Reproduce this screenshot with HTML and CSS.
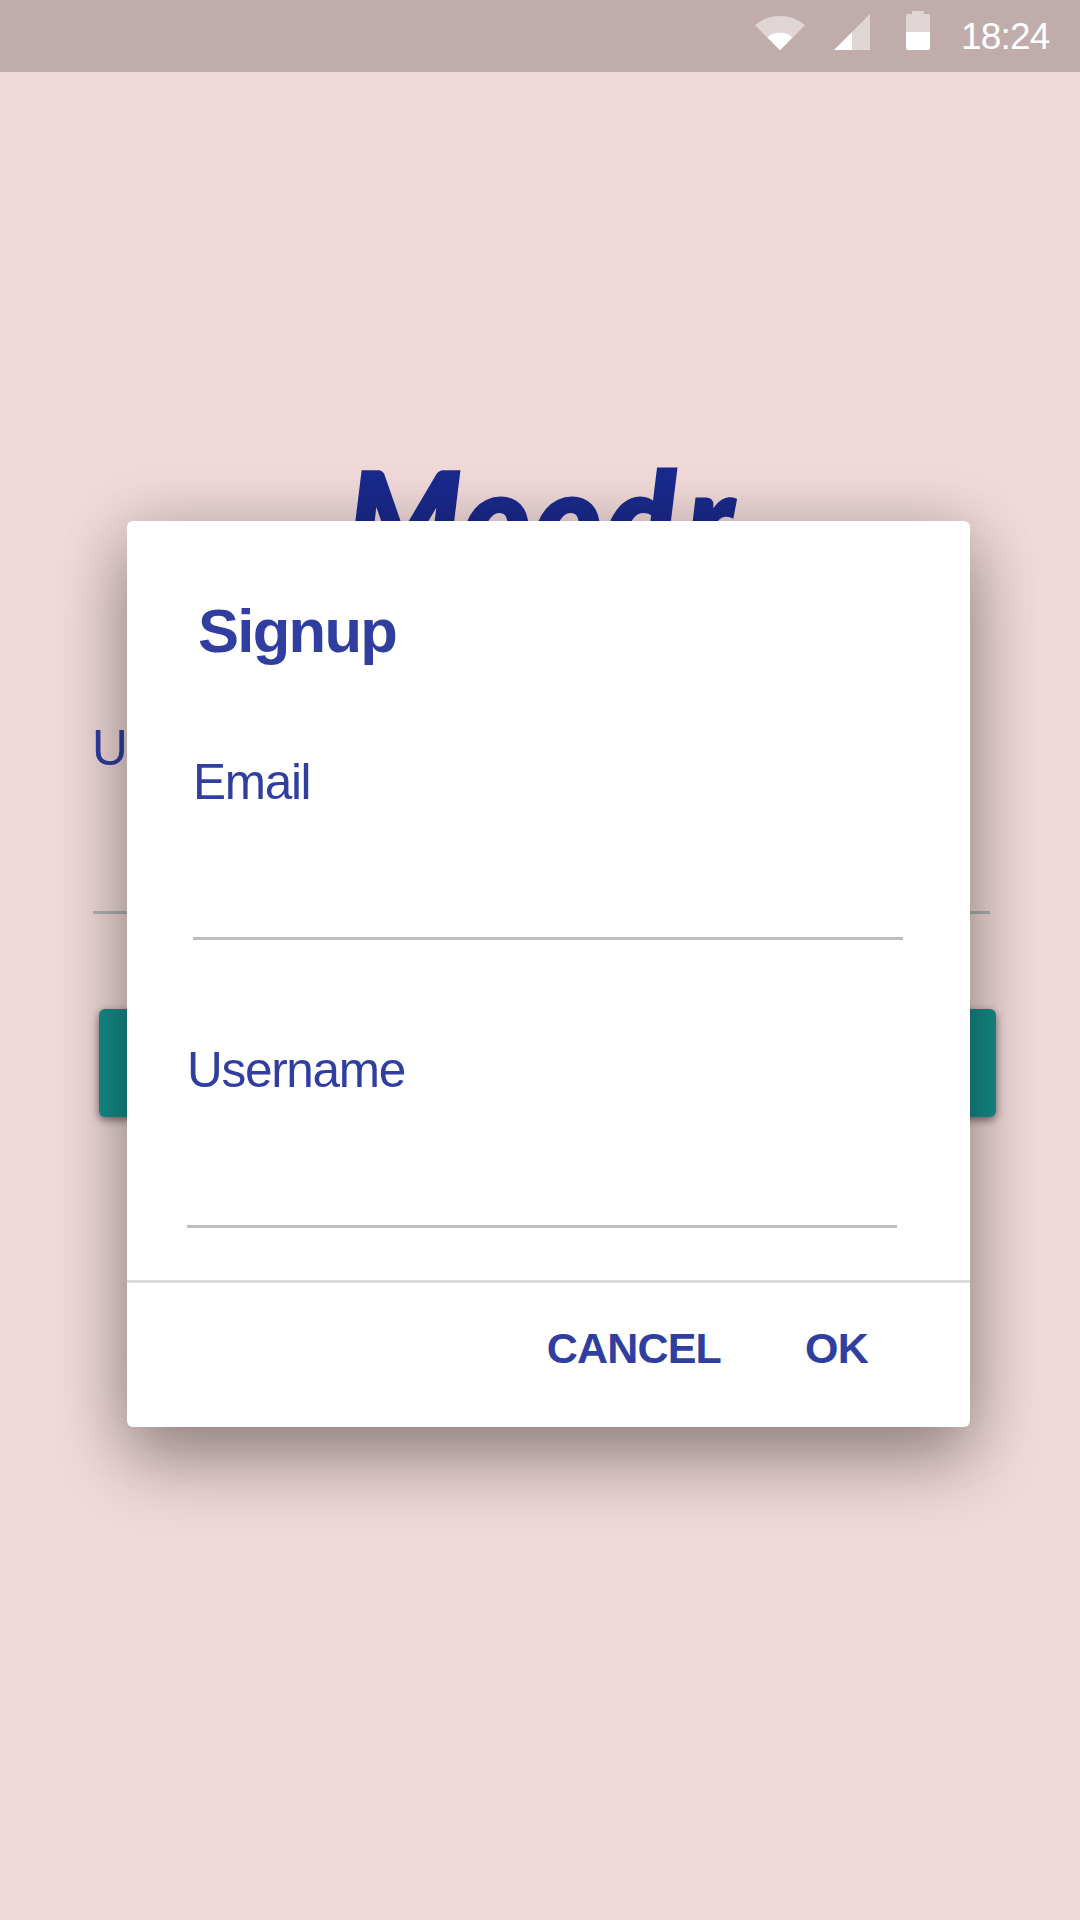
FILE: index.html
```
<!DOCTYPE html>
<html lang="en">
<head>
<meta charset="utf-8">
<title>Moodr</title>
<link rel="stylesheet" href="styles.css">
</head>
<body>
<div class="screen">
  <header class="status">
    <svg class="status-icons" width="180" height="44" viewBox="0 0 180 44" fill="#fff">
      <path opacity=".5" d="M0 17.3A38 38 0 0 1 50 17.3L25 42.3Z"/>
      <path d="M12.4 29.3A20 20 0 0 1 37.6 29.3L25 42.3Z"/>
      <path opacity=".5" d="M97 24L115 6V42H97Z"/>
      <path d="M79 42L97 24V42Z"/>
      <path opacity=".5" d="M151 24V8Q151 6 153 6H157V3H169V6H173Q175 6 175 8V24Z"/>
      <path d="M151 24H175V40Q175 42 173 42H153Q151 42 151 40Z"/>
    </svg>
    <span class="clock">18:24</span>
  </header>
  <main class="login">
    <h1 class="logo">Moo<span class="logo-wide">d</span>r</h1>
    <label class="label">Username</label>
    <div class="login-line"></div>
    <div class="login-button"></div>
  </main>
  <section class="dialog">
    <div class="form">
      <h2 class="title">Signup</h2>
      <div class="field email">
        <label class="label">Email</label>
      </div>
      <div class="field username">
        <label class="label">Username</label>
      </div>
    </div>
    <footer class="actions">
      <span class="action">CANCEL</span>
      <span class="action">OK</span>
    </footer>
  </section>
</div>
</body>
</html>
```
FILE: styles.css
```
* {
  box-sizing: border-box;
}

body {
  margin: 0;
  font-family: "Liberation Sans", sans-serif;
}

.screen {
  position: relative;
  width: 1080px;
  height: 1920px;
  overflow: hidden;
  background: #f0d9d8;
  color: #303f9f;
}

.status {
  display: flex;
  justify-content: flex-end;
  height: 72px;
  padding: 8px 28px 0 0;
  background: #c0adab;
}

.status-icons {
  margin-right: 26px;
}

.clock {
  width: 91px;
  padding-top: 7px;
  font-size: 37px;
  line-height: 44px;
  letter-spacing: -.8px;
  color: #fff;
  white-space: nowrap;
}

.login {
  display: flex;
  flex-direction: column;
  padding: 364px 84px 0 92px;
}

.logo {
  height: 282px;
  margin: 0 0 0 255px;
  font-family: Lato, sans-serif;
  font-size: 129px;
  font-weight: 900;
  font-style: italic;
  line-height: 160px;
  letter-spacing: 3.5px;
  color: #1a2a8c;
  -webkit-text-stroke: 3px #1a2a8c;
}

.logo-wide {
  letter-spacing: 11px;
}

.label {
  display: block;
  height: 60px;
  font-size: 49.5px;
  line-height: 60px;
  letter-spacing: -1.3px;
}

.login-line {
  width: 897px;
  height: 3px;
  margin: 133px 0 0 1px;
  background: #b2b3b3;
}

.login-button {
  width: 897px;
  height: 108px;
  margin: 95px 0 0 7px;
  border-radius: 6px;
  background: #158f8b;
  box-shadow: 0 3px 9px rgba(0, 0, 0, .5);
}

.dialog {
  position: absolute;
  top: 521px;
  left: 127px;
  display: flex;
  flex-direction: column;
  width: 843px;
  height: 906px;
  border-radius: 6px;
  background: #fff;
  box-shadow: 0 36px 72px rgba(0, 0, 0, .32), 0 4px 66px rgba(0, 0, 0, .18);
}

.form {
  height: 762px;
  padding: 74px 0 0 60px;
  border-bottom: 3px solid #dcdcdc;
}

.title {
  height: 72px;
  margin: 0 0 0 11px;
  font-size: 61.5px;
  line-height: 71px;
  letter-spacing: -1.7px;
}

.field {
  width: 710px;
  height: 188px;
  border-bottom: 3px solid #bcbdbd;
}

.email {
  margin: 85px 0 0 6px;
}

.username {
  margin-top: 100px;
}

.actions {
  display: flex;
  justify-content: flex-end;
  gap: 84px;
  padding: 40px 102px 0 0;
}

.action {
  font-size: 43px;
  font-weight: 700;
  line-height: 51px;
  letter-spacing: -.8px;
}
```
